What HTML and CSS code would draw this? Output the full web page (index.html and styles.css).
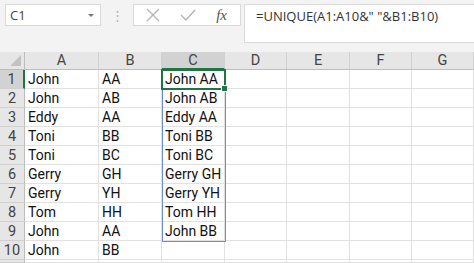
FILE: index.html
```html
<!DOCTYPE html>
<html lang="en">
<head>
    <meta charset="UTF-8">
    <title>UNIQUE</title>
    <link rel="stylesheet" href="styles.css">
</head>
<body>
    <div class="bar">
        <div class="namebox">
            <span>C1</span>
            <span class="arrow"></span>
        </div>
        <div class="dots">&#8942;</div>
        <div class="tools">
            <svg width="14" height="14" viewBox="0 0 14 14"><path d="M1 1 L13 13 M13 1 L1 13" stroke="#b4b4b4" stroke-width="1.3" fill="none"/></svg>
            <svg width="16" height="14" viewBox="0 0 16 14"><path d="M1 7 L6 12 L15 2" stroke="#b4b4b4" stroke-width="1.4" fill="none"/></svg>
            <span class="fx">fx</span>
        </div>
        <div class="formula">=UNIQUE(A1:A10&amp;" "&amp;B1:B10)</div>
    </div>

    <div class="sheet">
        <div class="grid" id="grid"></div>
        <div class="range"></div>
        <div class="active"><span class="handle"></span></div>
    </div>

    <script>
        const cols = ['A', 'B', 'C', 'D', 'E', 'F', 'G'];
        const data = [
            ['John', 'AA', 'John AA'],
            ['John', 'AB', 'John AB'],
            ['Eddy', 'AA', 'Eddy AA'],
            ['Toni', 'BB', 'Toni BB'],
            ['Toni', 'BC', 'Toni BC'],
            ['Gerry', 'GH', 'Gerry GH'],
            ['Gerry', 'YH', 'Gerry YH'],
            ['Tom', 'HH', 'Tom HH'],
            ['John', 'AA', 'John BB'],
            ['John', 'BB', ''],
            ['', '', '']
        ];
        const grid = document.getElementById('grid');
        let html = '<div class="corner"><span class="tri"></span></div>';
        cols.forEach(c => {
            html += `<div class="colhead${c === 'C' ? ' sel' : ''}">${c}</div>`;
        });
        data.forEach((row, i) => {
            // last row is only a sliver at the bottom edge, so no number
            html += `<div class="rowhead${i === 0 ? ' sel' : ''}">${i < 10 ? i + 1 : ''}</div>`;
            cols.forEach((c, j) => {
                html += `<div class="cell">${row[j] || ''}</div>`;
            });
        });
        grid.innerHTML = html;
    </script>
</body>
</html>
```

FILE: styles.css
```css
body {
    margin: 0;
    background-color: #f3f3f3;
    font-family: "Open Sans", "Liberation Sans", sans-serif;
    width: 474px;
    height: 263px;
    overflow: hidden;
}
.bar {
    display: flex;
    align-items: flex-start;
    padding: 4px 0 0 5px;
    height: 48px;
    box-sizing: border-box;
}
.namebox {
    width: 96px;
    height: 22px;
    box-sizing: border-box;
    background-color: #fff;
    border: 1px solid #dadada;
    display: flex;
    align-items: center;
    justify-content: space-between;
    padding: 0 6px 0 4px;
    font-size: 13px;
    color: #444;
}
.arrow {
    width: 0;
    height: 0;
    border-left: 3px solid transparent;
    border-right: 3px solid transparent;
    border-top: 3px solid #777;
}
.dots {
    width: 32px;
    text-align: center;
    color: #b8b8b8;
    font-size: 13px;
    line-height: 22px;
}
.tools {
    width: 108px;
    height: 22px;
    box-sizing: border-box;
    background-color: #fff;
    border: 1px solid #dadada;
    display: flex;
    align-items: center;
    justify-content: space-between;
    padding: 0 13px 0 12px;
}
.fx {
    font-family: "Liberation Serif", serif;
    font-style: italic;
    font-size: 15px;
    color: #555;
}
.formula {
    flex: 1;
    margin-left: 3px;
    height: 39px;
    box-sizing: border-box;
    background-color: #fff;
    border: 1px solid #dadada;
    border-right: none;
    padding: 2px 0 0 11px;
    font-size: 13px;
    color: #333;
}
.sheet {
    position: relative;
    margin-top: 4px;
}
.grid {
    display: grid;
    grid-template-columns: 25px 74px 63px 63px 62px 63px 62px 62px;
    grid-template-rows: 18px repeat(10, 19px) 3px;
    background-color: #fff;
}
.corner {
    background-color: #e6e6e6;
    border-right: 1px solid #bdbdbd;
    border-bottom: 1px solid #bdbdbd;
    position: relative;
}
.tri {
    position: absolute;
    right: 3px;
    bottom: 3px;
    width: 0;
    height: 0;
    border-left: 11px solid transparent;
    border-bottom: 11px solid #c2c2c2;
}
.colhead, .rowhead {
    background-color: #e6e6e6;
    color: #444;
    font-family: Roboto, "Liberation Sans", sans-serif;
    font-size: 14.5px;
    display: flex;
    align-items: center;
    justify-content: center;
    box-sizing: border-box;
}
.colhead {
    border-right: 1px solid #d0d0d0;
    border-bottom: 1px solid #bdbdbd;
}
.colhead.sel {
    background-color: #d2d2d2;
    border-bottom: 2px solid #217346;
}
.rowhead {
    border-right: 1px solid #bdbdbd;
    border-bottom: 1px solid #d0d0d0;
}
.rowhead.sel {
    background-color: #d2d2d2;
    border-right: 2px solid #217346;
}
.cell {
    box-sizing: border-box;
    border-right: 1px solid #e1e1e1;
    border-bottom: 1px solid #e1e1e1;
    font-family: Roboto, "Liberation Sans", sans-serif;
    font-size: 14px;
    color: #111;
    padding-left: 3px;
    line-height: 18px;
    white-space: nowrap;
    overflow: hidden;
}
.range {
    position: absolute;
    left: 162px;
    top: 18px;
    width: 64px;
    height: 172px;
    box-sizing: border-box;
    border: 1px solid #6d8fc7;
}
.active {
    position: absolute;
    left: 161px;
    top: 17px;
    width: 65px;
    height: 21px;
    box-sizing: border-box;
    border: 2px solid #217346;
}
.handle {
    position: absolute;
    right: -4px;
    bottom: -4px;
    width: 5px;
    height: 5px;
    background-color: #217346;
    border: 1px solid #fff;
}
```
